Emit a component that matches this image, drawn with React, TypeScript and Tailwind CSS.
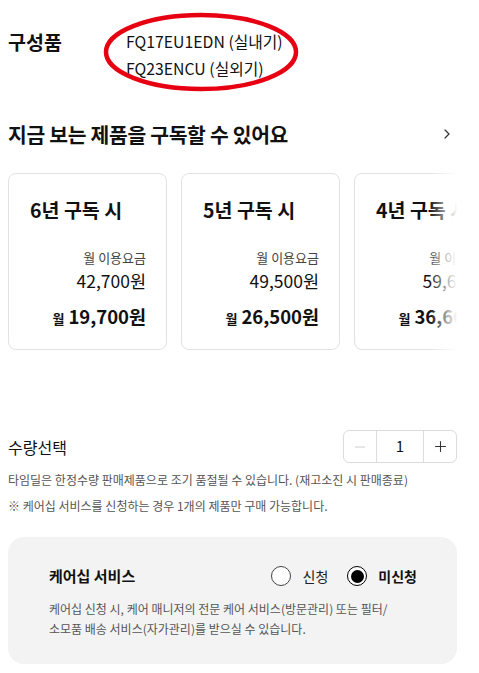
import { ChevronRight, Minus, Plus } from "lucide-react";

const plans = [
    { years: 6, fee: "42,700원", price: "19,700원" },
    { years: 5, fee: "49,500원", price: "26,500원" },
    { years: 4, fee: "59,600원", price: "36,600원" },
];

export default function App() {
    return (
        <div
            className="relative w-[479px] h-[673px] overflow-hidden bg-white text-[#111]"
            style={{ fontFamily: '"Noto Sans CJK KR", "Noto Sans", sans-serif' }}
        >
            {/* 구성품 */}
            <div className="relative flex pl-2 pt-[28px]">
                <div className="w-[118px] text-[19.5px] font-bold leading-[28px]">구성품</div>
                <div className="flex flex-col text-[15.8px] leading-[27px]">
                    <span>FQ17EU1EDN (실내기)</span>
                    <span>FQ23ENCU (실외기)</span>
                </div>
                <svg className="absolute left-[102px] top-[11px]" width="200" height="84" viewBox="0 0 200 84">
                    <ellipse cx="99" cy="41" rx="95" ry="37" fill="none" stroke="#e60012" strokeWidth="4.5" />
                </svg>
            </div>

            {/* 구독 가능 */}
            <div className="flex items-center justify-between pl-2 pr-[24px] mt-[37px]">
                <h2 className="text-[20.4px] font-bold leading-[30px] tracking-[-0.3px]">지금 보는 제품을 구독할 수 있어요</h2>
                <ChevronRight className="w-4 h-4 text-[#333]" strokeWidth={1.8} />
            </div>

            <div className="relative mt-[24px] ml-2 w-[449px] overflow-hidden">
                <div className="flex gap-[14px]">
                    {plans.map((p) => (
                        <div
                            key={p.years}
                            className="shrink-0 w-[159px] h-[177px] rounded-[8px] border border-[#e2e2e2] bg-white flex flex-col"
                        >
                            <div className="pl-[21px] pt-[22px] text-[19.5px] font-bold leading-[28px]">{p.years}년 구독 시</div>
                            <div className="flex flex-col items-end pr-[20px] mt-[25px]">
                                <span className="text-[13px] text-[#444] leading-[18px]">월 이용요금</span>
                                <span className="text-[17.5px] leading-[26px] mt-[1px]">{p.fee}</span>
                                <span className="mt-[9px] leading-[26px]">
                                    <span className="text-[13px] font-bold mr-[4px]">월</span>
                                    <span className="text-[18.5px] font-bold">{p.price}</span>
                                </span>
                            </div>
                        </div>
                    ))}
                </div>
                <div className="absolute right-0 top-0 h-full w-[28px] bg-gradient-to-r from-white/0 to-white" />
            </div>

            {/* 수량선택 */}
            <div className="flex items-center justify-between pl-2 pr-[22px] mt-[80px]">
                <span className="text-[16px] leading-[24px]">수량선택</span>
                <div className="flex h-[33px] rounded-[6px] border border-[#dcdcdc]">
                    <div className="w-[33px] flex items-center justify-center border-r border-[#dcdcdc]">
                        <Minus className="w-[16px] h-[16px] text-[#ccc]" strokeWidth={1.5} />
                    </div>
                    <div className="w-[46px] flex items-center justify-center text-[15px]">1</div>
                    <div className="w-[33px] flex items-center justify-center border-l border-[#dcdcdc]">
                        <Plus className="w-[17px] h-[17px] text-[#333]" strokeWidth={1.5} />
                    </div>
                </div>
            </div>
            <p className="pl-2 mt-[7px] text-[12px] text-[#555] leading-[20px]">
                타임딜은 한정수량 판매제품으로 조기 품절될 수 있습니다. (재고소진 시 판매종료)
            </p>
            <p className="pl-2 mt-[6px] text-[12px] text-[#555] leading-[20px]">
                ※ 케어십 서비스를 신청하는 경우 1개의 제품만 구매 가능합니다.
            </p>

            {/* 케어십 */}
            <div className="mx-2 mt-[21px] w-[449px] h-[127px] rounded-[16px] bg-[#f3f3f3] pl-[41px] pr-[40px] pt-[27px]">
                <div className="flex items-center justify-between">
                    <span className="text-[15px] font-bold leading-[24px]">케어십 서비스</span>
                    <div className="flex items-center">
                        <span className="w-[20px] h-[20px] rounded-full border border-[#444] bg-white" />
                        <span className="ml-[12px] text-[14px] leading-[22px] text-[#222]">신청</span>
                        <span className="ml-[19px] w-[20px] h-[20px] rounded-full border-[1.5px] border-black bg-white flex items-center justify-center">
                            <span className="w-[13px] h-[13px] rounded-full bg-black" />
                        </span>
                        <span className="ml-[11px] text-[14px] font-bold leading-[22px]">미신청</span>
                    </div>
                </div>
                <p className="mt-[11px] text-[12px] leading-[20px] text-[#555]">
                    케어십 신청 시, 케어 매니저의 전문 케어 서비스(방문관리) 또는 필터/
                    <br />
                    소모품 배송 서비스(자가관리)를 받으실 수 있습니다.
                </p>
            </div>
        </div>
    );
}
